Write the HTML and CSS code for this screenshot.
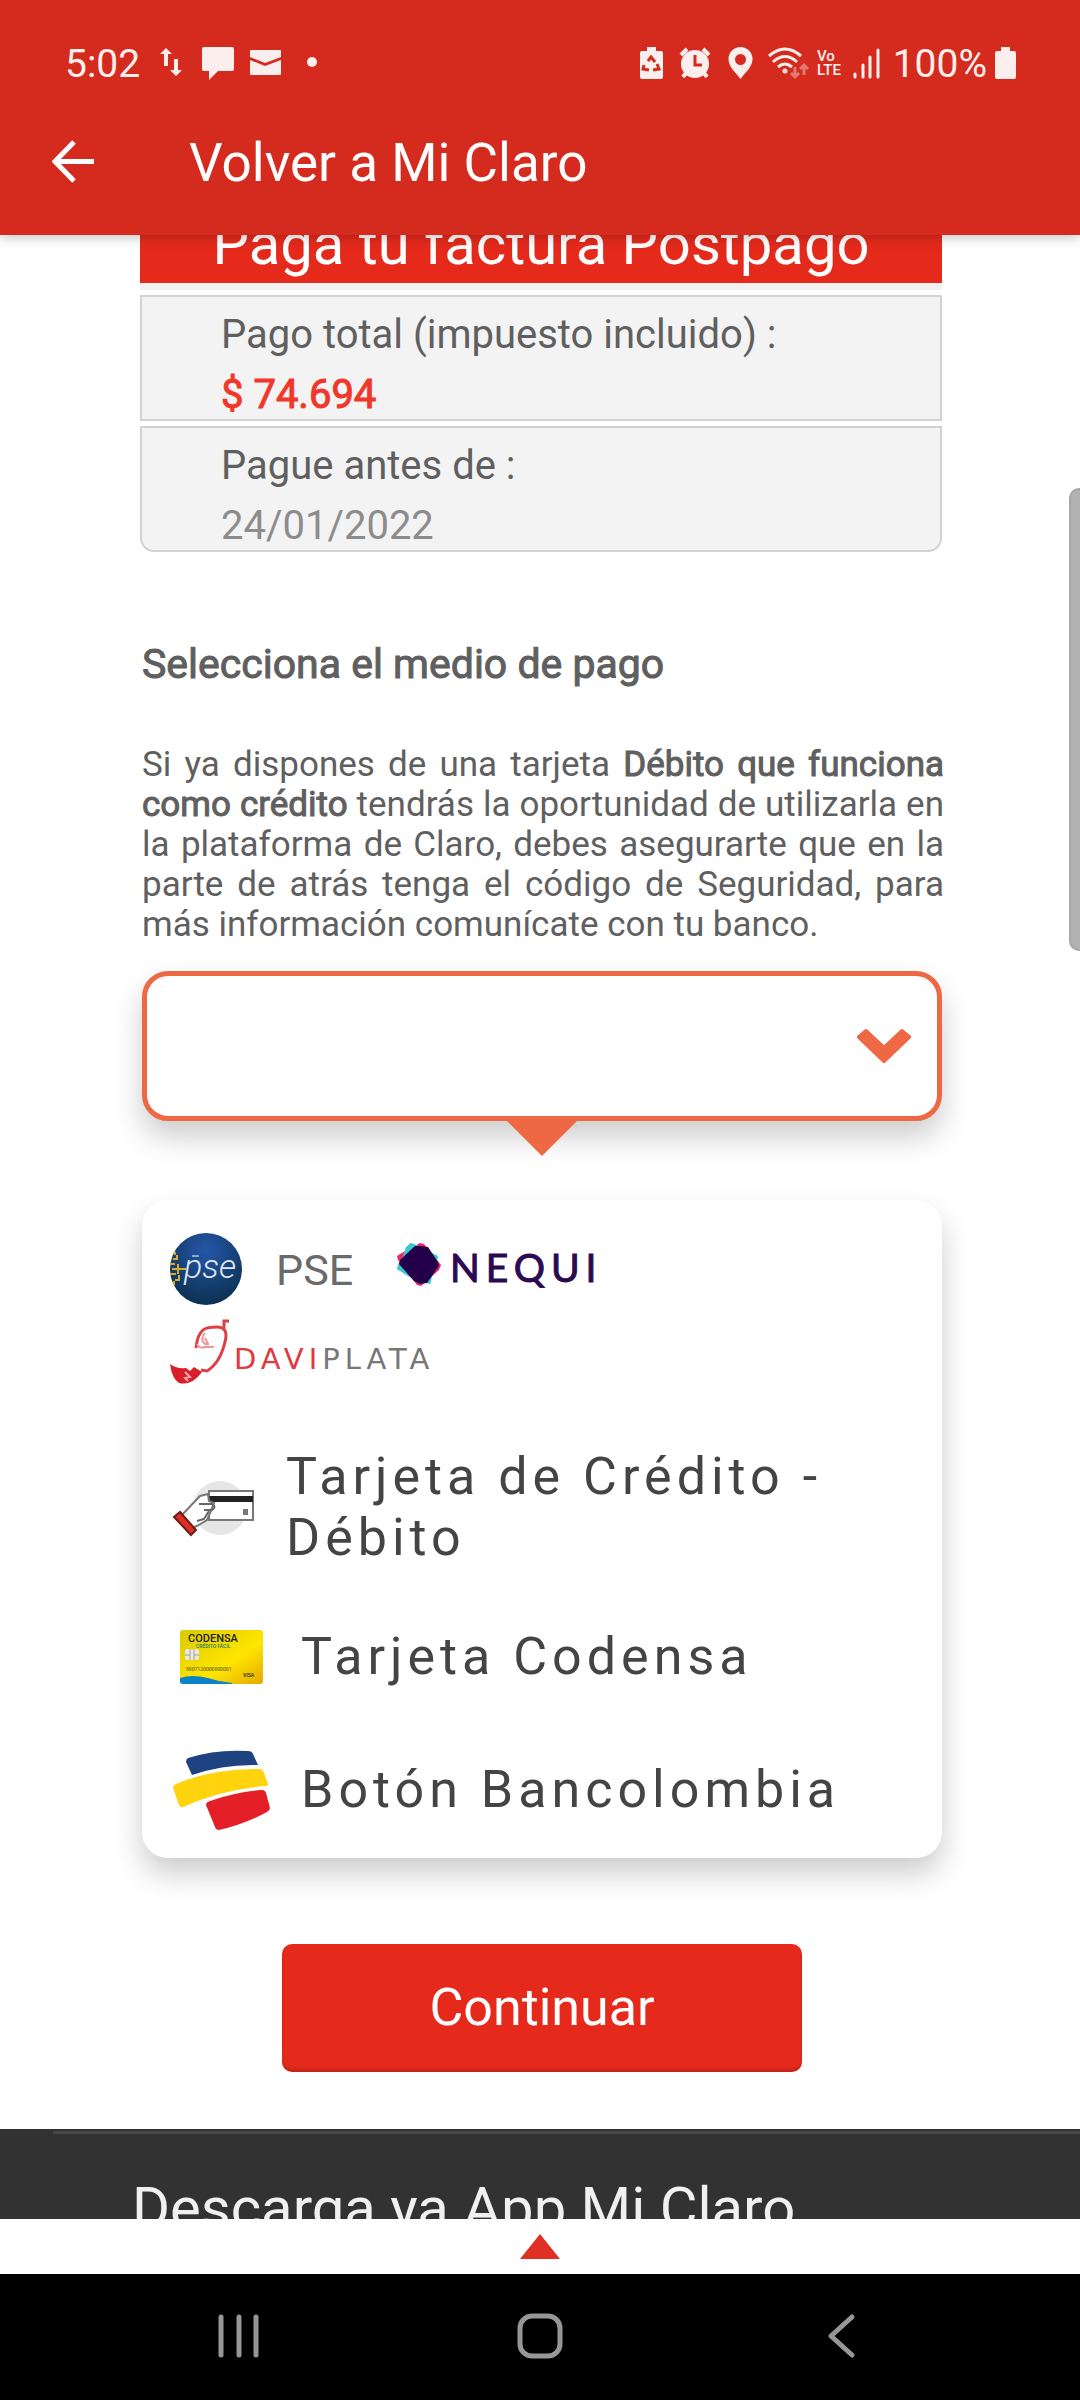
FILE: index.html
```html
<!DOCTYPE html>
<html lang="es">
<head>
<meta charset="utf-8">
<meta name="viewport" content="width=device-width, initial-scale=1">
<title>Mi Claro - Paga tu factura</title>
<link rel="stylesheet" href="styles.css">
</head>
<body>
<header class="app-header">
  <div class="status">
    <div class="status-side">
      <span class="clock">5:02</span>
      <svg width="33" height="40" viewBox="0 0 33 40" fill="currentColor" aria-hidden="true"><path d="M6 6l6 6H8v12H4V12H0zM16 34l-6-6h4V17h4v11h4z"/></svg>
      <svg width="40" height="40" viewBox="0 0 40 40" fill="currentColor" aria-hidden="true"><path d="M3 5h28a2 2 0 0 1 2 2v20a2 2 0 0 1-2 2H17l-9 9v-9H3a2 2 0 0 1-2-2V7a2 2 0 0 1 2-2z"/></svg>
      <svg width="49" height="40" viewBox="0 0 49 40" fill="currentColor" aria-hidden="true"><path d="M2 8h29a1 1 0 0 1 1 1v6l-16 6-15-6V9a1 1 0 0 1 1-1zM1 18l15 6 16-6v14a1 1 0 0 1-1 1H2a1 1 0 0 1-1-1z"/></svg>
      <svg width="12" height="40" viewBox="0 0 12 40" fill="currentColor" aria-hidden="true"><circle cx="6" cy="20" r="5"/></svg>
    </div>
    <div class="status-side">
      <svg width="31" height="40" viewBox="0 0 31 40" fill="currentColor" aria-hidden="true"><path d="M7 5h9v4h5a2 2 0 0 1 2 2v24a2 2 0 0 1-2 2H2a2 2 0 0 1-2-2V11a2 2 0 0 1 2-2h5z"/><path d="M8 19l3-4 4 5M17 22l2 5-6 1M4 23l-1 4 6 1" fill="none" stroke="#d52b1e" stroke-width="3"/><path d="M11 19v9M8 23l3-4 3 4" fill="none" stroke="currentColor" stroke-width="1"/></svg>
      <svg width="41" height="40" viewBox="0 0 41 40" fill="currentColor" aria-hidden="true"><circle cx="16" cy="22" r="14"/><path d="M2 13l6-6M24 7l6 6M7 31l-3 4M25 31l3 4" stroke="currentColor" stroke-width="4" fill="none"/><path d="M16 13v10h7" fill="none" stroke="#d52b1e" stroke-width="3"/></svg>
      <svg width="32" height="40" viewBox="0 0 32 40" fill="currentColor" aria-hidden="true"><path fill-rule="evenodd" d="M12.500 5a12 12 0 0 1 12 12c0 8-7 13-12 20-5-7-12-12-12-20a12 12 0 0 1 12-12zm0 7a5.500 5.500 0 1 0 0 11 5.500 5.500 0 0 0 0-11z"/></svg>
      <svg width="41" height="40" viewBox="0 0 41 40" fill="none" stroke="currentColor" stroke-width="3" aria-hidden="true"><path d="M1 14q16-14 32 0M5 20q12-11 24 0M10 25q7-6 14 0"/><circle cx="17" cy="29" r="1" /><path d="M27 25v9M23 31l4 4 4-4M36 33v-9M32 27l4-4 4 4" opacity=".4"/></svg>
      <svg width="28" height="40" viewBox="0 0 28 40" fill="currentColor" aria-hidden="true"><text class="volte" x="0" y="19">Vo</text><text class="volte" x="0" y="33">LTE</text></svg>
      <svg width="32" height="40" viewBox="0 0 32 40" fill="none" stroke="currentColor" stroke-width="3" stroke-linecap="round" aria-hidden="true"><path d="M2 32v3M10 23v12M17 15v20M25 8v27"/></svg>
      <span class="clock">100%</span>
      <svg width="21" height="40" viewBox="0 0 21 40" fill="currentColor" aria-hidden="true"><path d="M6 5h9v4h4a2 2 0 0 1 2 2v24a2 2 0 0 1-2 2H2a2 2 0 0 1-2-2V11a2 2 0 0 1 2-2h4z"/></svg>
    </div>
  </div>
  <div class="toolbar">
    <button class="back" type="button" aria-label="Volver"><svg width="43" height="43" viewBox="0 0 43 43" fill="none" stroke="currentColor" stroke-width="5"><path d="M42 21.500H4M22 2L3 21.500 22 41"/></svg></button>
    <span class="toolbar-title">Volver a Mi Claro</span>
  </div>
</header>

<main class="page">
  <div class="content">
    <section class="bill">
      <h1 class="bill-title">Paga tu factura Postpago</h1>
      <div class="bill-row"><p>Pago total (impuesto incluido) :</p><p class="amount">$ 74.694</p></div>
      <div class="bill-row"><p>Pague antes de :</p><p class="due">24/01/2022</p></div>
    </section>

    <form class="payment">
      <h2 class="payment-title">Selecciona el medio de pago</h2>
      <p class="note">Si ya dispones de una tarjeta <strong>Débito que funciona como crédito</strong> tendrás la oportunidad de utilizarla en la plataforma de Claro, debes asegurarte que en la parte de atrás tenga el código de Seguridad, para más información comunícate con tu banco.</p>
      <div class="picker">
        <select class="picker-field" aria-label="Medio de pago"><option></option></select>
        <svg class="picker-chevron" width="54" height="36" viewBox="0 0 54 36" fill="currentColor" stroke="currentColor" stroke-width="4" stroke-linejoin="round" aria-hidden="true"><path d="M9 3l18 17L45 3l7 6-25 24L2 9z"/></svg>
      </div>

      <ul class="options">
        <li>
          <button class="option option-wallets" type="button" aria-label="PSE, Nequi, Daviplata">
            <svg width="190" height="76" viewBox="0 0 190 76" aria-hidden="true">
              <defs><radialGradient id="pse" cx=".5" cy=".25" r=".75"><stop offset="0" stop-color="#2557a8"/><stop offset="1" stop-color="#0b3050"/></radialGradient></defs>
              <circle cx="38" cy="38" r="36" fill="url(#pse)"/>
              <path d="M2 33h5M4 38h14M2 43h6M5 28h4v-4M7 49h4v-5M7 24v-3M10 33v10M6 54v-4" fill="none" stroke="#dba827" stroke-width="2"/>
              <text class="logo-pse" x="16" y="47">pse</text>
              <path d="M24 25h7" stroke="#8aa6c6" stroke-width="2"/>
              <text class="word-pse" x="108" y="54">PSE</text>
            </svg>
            <svg width="220" height="76" viewBox="0 0 220 76" aria-hidden="true">
              <path d="M18 12l6 2 22 11-3 7-5 21-8-2L5 38l3-6z" fill="#3cc6d0"/><path d="M5 25l3-2 20-11 4 1 17 21-2 5-18 16-4-1L6 29z" fill="#ed2868"/><path d="M14 16l5-4 8 3-18 16zM40 23l6 3-2 7zM5 38l2-7 12 16zM31 50l11-12-4 15z" fill="#3cc6d0"/>
              <path d="M7 33l1-4 15-14h6l7 1 10 15 1 4-12 17-7 1-6-3z" fill="#24004a"/>
              <text class="word-nequi" x="58" y="51">NEQUI</text>
            </svg>
            <svg width="280" height="68" viewBox="0 0 280 68" aria-hidden="true">
              <path d="M28 29C30 8 39 8 49 8q12 0 8 15Q52 44 39 52l-6-1M61 2h-5v8" fill="none" stroke="#de3e44" stroke-width="3"/><path d="M29 25q2 5 8 3h9M37 14q-4 5-2 9 2 3 5 2l-3-6" fill="none" stroke="#ef9499" stroke-width="2"/>
              <path d="M2 45q6 5 16 4l4 3 4-4 8 5Q24 67 11 64 4 60 2 45z" fill="#d91f2a"/><path d="M17 53l5 5-5 1 3 3" fill="none" stroke="#f0a6aa" stroke-width="2"/>
              <text class="word-davi" x="66" y="50">DAVI<tspan fill="#777">PLATA</tspan></text>
            </svg>
          </button>
        </li>
        <li>
          <button class="option option-card" type="button">
            <svg width="84" height="60" viewBox="0 0 84 60" aria-hidden="true">
              <circle cx="48" cy="31" r="27" fill="#e6e6e6"/>
              <path d="M37 14h44v29H37z" fill="#fff" stroke="#777" stroke-width="2"/><path d="M37 19h44v6H37z" fill="#222"/><path d="M71 32h5v6h-5z" fill="#777"/>
              <path d="M9 39l19-20 8-2 1 7 5 2-4 10-3 7-10 6-6 2z" fill="#fff" stroke="#777" stroke-width="2"/><path d="M27 27h13q5 3 0 6h-8M37 34l-5 8-7 2" fill="none" stroke="#666" stroke-width="2"/>
              <path d="M2 40l6-5 16 18-5 5z" fill="#df2e25" stroke="#6b1d18" stroke-width="2"/>
            </svg>
            <span>Tarjeta de Crédito - Débito</span>
          </button>
        </li>
        <li>
          <button class="option" type="button">
            <svg width="98" height="54" viewBox="0 0 98 54" aria-hidden="true">
              <defs><linearGradient id="gold" x1="0" y1="0" x2="1" y2="1"><stop offset="0" stop-color="#d9c900"/><stop offset=".6" stop-color="#ffe600"/><stop offset="1" stop-color="#e3a900"/></linearGradient></defs>
              <rect x="7" y="0" width="83" height="54" rx="3" fill="url(#gold)"/>
              <path d="M7 48q12-4 28 0 12 4 24 5v1H10a3 3 0 0 1-3-3z" fill="#0a84c6"/>
              <text class="card-brand" x="15" y="12">CODENSA</text><text class="card-small" x="23" y="18" fill="#287a63">CRÉDITO FÁCIL</text>
              <rect x="12" y="19" width="14" height="11" rx="2" fill="#e9e9dc"/><path d="M17 19v11M21 19v11M12 25h5M21 25h5" stroke="#a4a48e"/>
              <text class="card-small" x="13" y="41" fill="#6d6714">5907120000000001</text><text class="card-small" x="70" y="47" fill="#222">VISA</text>
            </svg>
            <span>Tarjeta Codensa</span>
          </button>
        </li>
        <li>
          <button class="option" type="button">
            <svg width="98" height="80" viewBox="0 0 98 80" aria-hidden="true">
              <path d="M15 8Q43-1 75 1q4 0 5 3l5 11q-34-1-66 10l-6-13q0-3 2-4z" fill="#1f4280"/>
              <path d="M3 34q34-15 83-15 4 0 5 4l4 11q0 2-3 2-45 4-82 21-3 1-4-2L0 38q0-3 3-4z" fill="#ffd30d"/>
              <path d="M37 51q26-9 52-11 3 0 4 3l4 15q0 2-3 4-22 12-48 18-3 0-4-3L33 55q0-3 4-4z" fill="#e41e26"/>
            </svg>
            <span>Botón Bancolombia</span>
          </button>
        </li>
      </ul>
      <button class="submit" type="submit">Continuar</button>
    </form>
  </div>
  <footer class="footer"><p class="footer-title">Descarga ya App Mi Claro</p></footer>
  <div class="scrollbar"></div>
</main>

<button class="drawer" type="button" aria-label="Abrir menú"><svg width="40" height="25" viewBox="0 0 40 25"><path d="M20 0l20 25H0z" fill="#e03026"/></svg></button>
<nav class="system-nav" aria-label="Sistema">
  <button type="button" aria-label="Recientes"><svg width="46" height="46" viewBox="0 0 46 46" fill="none" stroke="currentColor" stroke-width="5" stroke-linecap="round"><path d="M5 4v38M23 4v38M40 4v38"/></svg></button>
  <button type="button" aria-label="Inicio"><svg width="46" height="46" viewBox="0 0 46 46" fill="none" stroke="currentColor" stroke-width="5"><rect x="3" y="3" width="40" height="40" rx="12"/></svg></button>
  <button type="button" aria-label="Atrás"><svg width="46" height="46" viewBox="0 0 46 46" fill="none" stroke="currentColor" stroke-width="5" stroke-linecap="round" stroke-linejoin="round"><path d="M34 4L13 23l21 19"/></svg></button>
</nav>
</body>
</html>
```
FILE: styles.css
```css
* { box-sizing: border-box; }

body {
  margin: 0;
  height: 100vh;
  display: flex;
  flex-direction: column;
  overflow: hidden;
  background: #fff;
  color: #5f5f5f;
  font-family: Roboto, "Noto Sans", sans-serif;
}

h1, h2, p, ul { margin: 0; padding: 0; font-weight: 400; }
ul { list-style: none; }
svg { display: block; flex: none; }
button { border: 0; padding: 0; background: none; color: inherit; font: inherit; }

.app-header {
  position: relative;
  z-index: 1;
  background: #d52b1e;
  color: #fff;
  box-shadow: 0 2px 12px rgba(0, 0, 0, .25);
}
.status {
  display: flex;
  justify-content: space-between;
  padding: 40px 64px 0 65px;
  color: #fbefee;
}
.status-side { display: flex; align-items: center; gap: 8px; }
.status-side .clock { padding-top: 4px; font-size: 39px; line-height: 40px; }
.status-side:first-child .clock { margin-right: 12px; }
.volte { font-size: 15px; font-weight: 500; }
.toolbar {
  display: flex;
  align-items: center;
  gap: 94px;
  padding: 36px 52px 32px;
}
.toolbar-title { padding-top: 4px; font-size: 53px; line-height: 79px; }

.page {
  position: relative;
  flex: 1 1 0;
  min-height: 0;
  overflow: hidden;
}
.content { padding: 0 138px 57px 140px; }

.bill { margin-top: -32px; }
.bill-title {
  margin-bottom: 5px;
  padding-top: 2px;
  border-bottom: 7px solid #f2f2f2;
  background: #e52a1c;
  color: #fff;
  font-size: 58px;
  line-height: 78px;
  text-align: center;
}
.bill-row {
  margin-bottom: 5px;
  padding: 8px 79px 0;
  height: 126px;
  border: 2px solid #d1d3d2;
  background: #f3f3f3;
  font-size: 40px;
  line-height: 60px;
}
.bill-row:last-child { margin-bottom: 0; border-radius: 0 0 14px 14px; }
.amount { color: #f0372a; -webkit-text-stroke: 1px; }
.due { color: #8c8c8c; }

.payment { padding: 82px 0 0 2px; }
.payment-title { font-size: 41px; line-height: 60px; -webkit-text-stroke: 1px; }
.note {
  margin: 51px -2px 26px 0;
  font-size: 35px;
  line-height: 40px;
  text-align: justify;
}
.note strong { font-weight: 400; -webkit-text-stroke: 1px; }

.picker { position: relative; color: #ee6843; }
.picker-field {
  display: block;
  appearance: none;
  width: 100%;
  height: 150px;
  border: 5px solid #ee6843;
  border-radius: 26px;
  background: #fff;
  box-shadow: 0 16px 30px rgba(0, 0, 0, .2);
  font-size: 40px;
}
.picker::after {
  content: "";
  position: absolute;
  top: 100%;
  left: 50%;
  margin-left: -35px;
  border: 35px solid transparent;
  border-top-color: #ee6843;
  border-bottom: 0;
}
.picker-chevron {
  position: absolute;
  top: 57px;
  right: 31px;
  pointer-events: none;
}

.options {
  margin-top: 79px;
  padding: 31px 26px 2px;
  border-radius: 26px;
  background: #fff;
  box-shadow: 0 16px 30px rgba(0, 0, 0, .2);
}
.option {
  display: flex;
  align-items: center;
  gap: 30px;
  width: 100%;
  min-height: 133px;
  padding-left: 5px;
  color: #444;
  font-size: 52px;
  line-height: 61px;
  letter-spacing: 5px;
  text-align: left;
}
.option-wallets { flex-wrap: wrap; gap: 12px 34px; padding-left: 0; }
.option-card { padding: 59px 0 22px 4px; }
.option-wallets svg { letter-spacing: 0; }
.logo-pse { fill: #dfe9f5; font: italic 300 34px Roboto, sans-serif; }
.word-pse { fill: #6a6a6a; font: 400 43px Roboto, sans-serif; }
.word-nequi { fill: #2b0a52; font: 400 39px Lato, sans-serif; letter-spacing: 6px; stroke: #2b0a52; stroke-width: 1px; }
.word-davi { fill: #e0393f; font: 29px "DejaVu Sans", sans-serif; letter-spacing: 5px; }
.card-brand { fill: #222; font: 500 11px Roboto, sans-serif; letter-spacing: 0; }
.card-small { font: 500 5px Roboto, sans-serif; letter-spacing: 0; }

.submit {
  display: block;
  width: 65%;
  height: 128px;
  margin: 86px auto 0;
  padding-bottom: 2px;
  border-radius: 10px;
  background: #e52a1c;
  box-shadow: inset 0 -3px 3px rgba(0, 0, 0, .15);
  color: #fff;
  font-size: 52px;
}

.footer { padding: 44px 132px; background: #323232; position: relative; }
.footer::before {
  content: "";
  position: absolute;
  top: 2px;
  left: 53px;
  right: 0;
  height: 3px;
  background: #454746;
}
.footer-title { color: #f0f0f0; font-size: 58px; line-height: 70px; white-space: nowrap; }

.scrollbar {
  position: absolute;
  top: 253px;
  right: 0;
  width: 11px;
  height: 463px;
  border: 2px solid #a6a6a6;
  border-right: 0;
  border-radius: 10px 0 0 10px;
  background: #b2b2b2;
}

.drawer {
  flex: none;
  display: flex;
  align-items: center;
  justify-content: center;
  height: 55px;
  background: #fff;
}
.system-nav {
  flex: none;
  display: flex;
  justify-content: space-around;
  align-items: center;
  height: 126px;
  padding: 0 88px 2px 88px;
  background: #000;
  color: #969696;
}
```
